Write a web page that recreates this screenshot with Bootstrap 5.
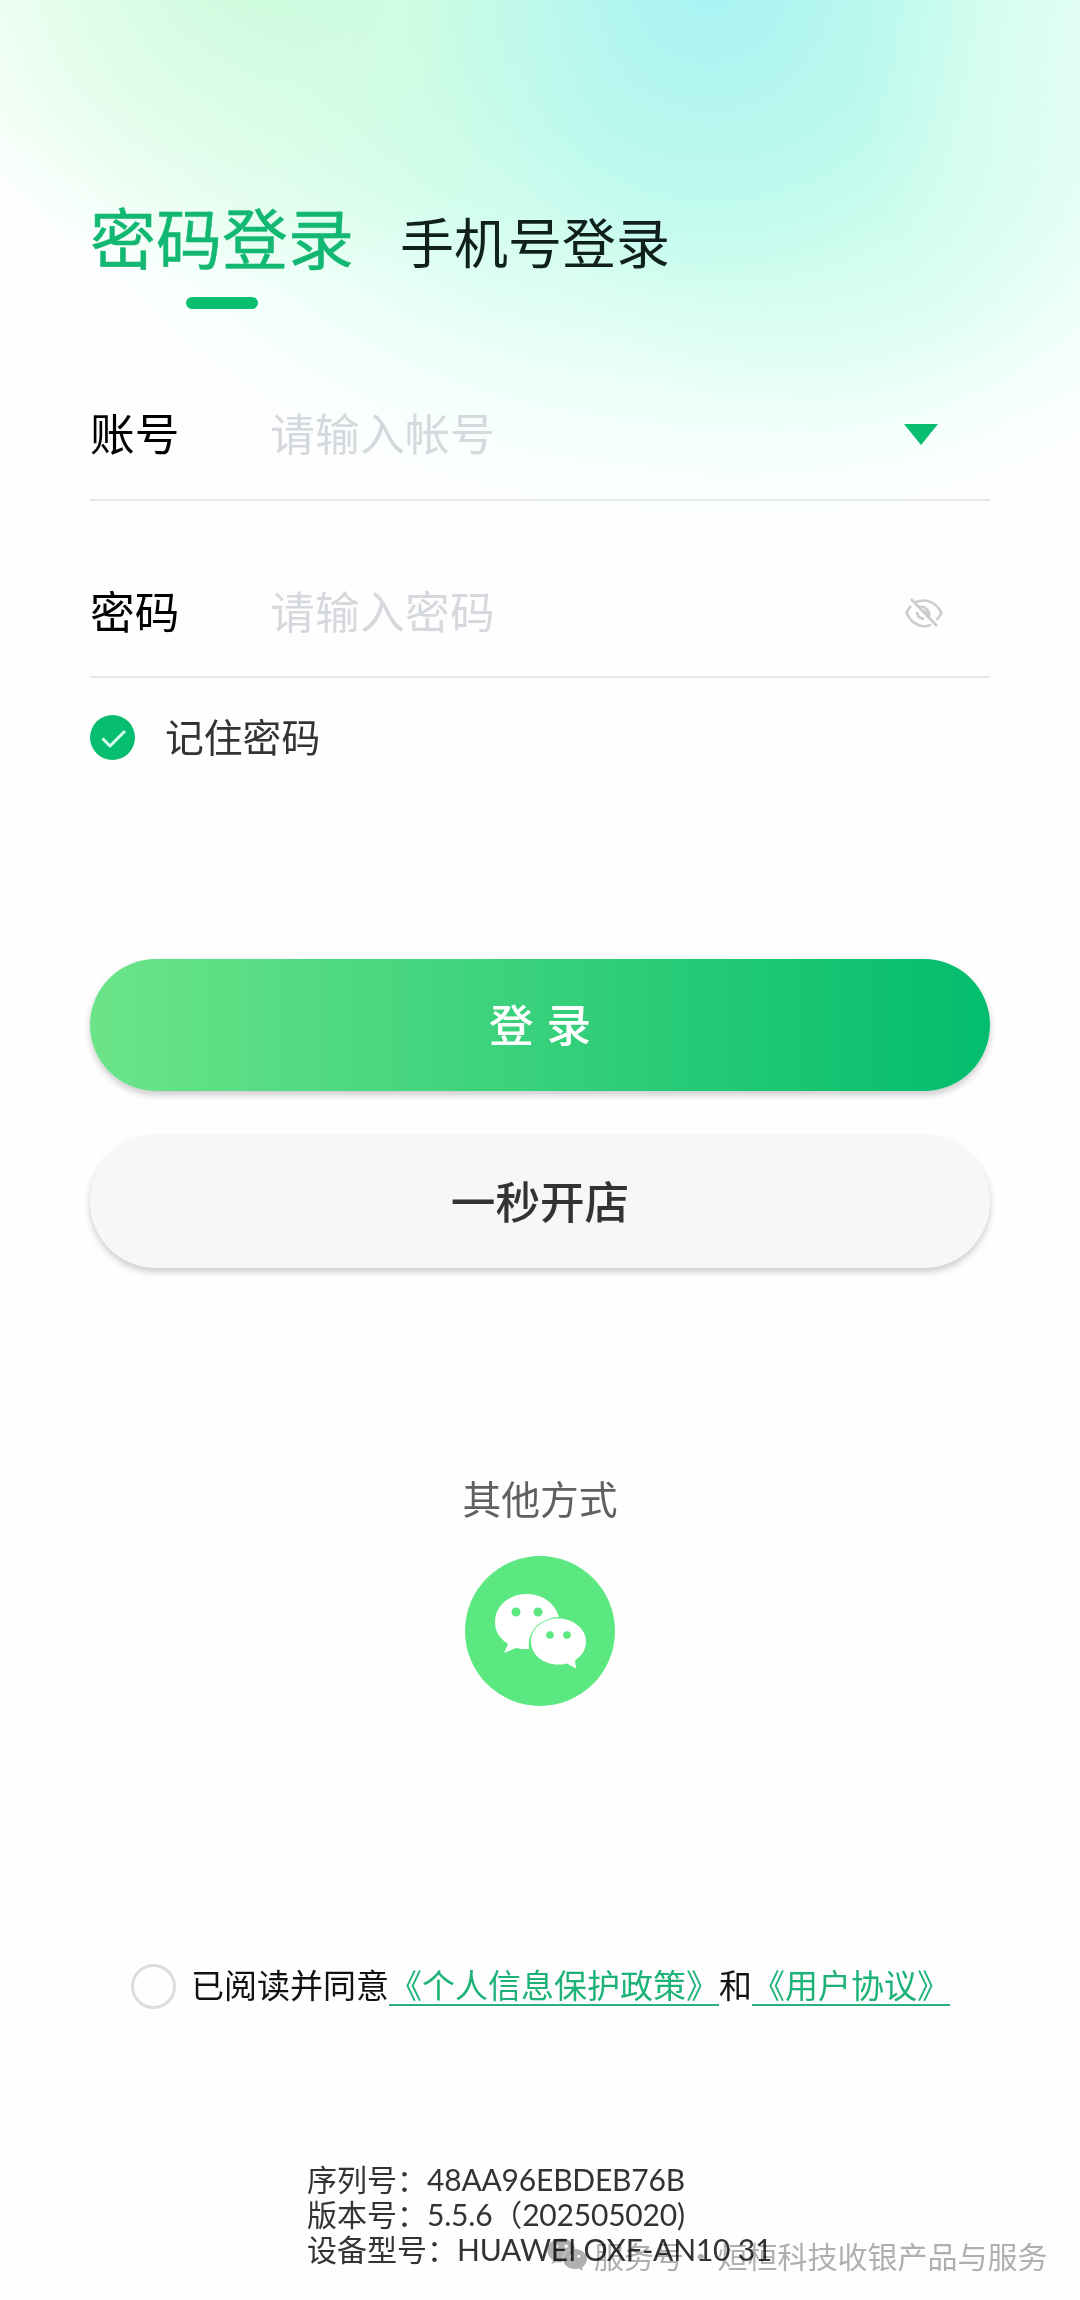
<!DOCTYPE html>
<html lang="zh-CN">
<head>
<meta charset="utf-8">
<meta name="viewport" content="width=device-width, initial-scale=1">
<title>登录</title>
<link rel="stylesheet" href="https://cdn.jsdelivr.net/npm/bootstrap@5.3.0/dist/css/bootstrap.min.css">
<style>
body{font-family:"Noto Sans CJK SC",sans-serif;background:#fefefe;color:#000;line-height:1}
.screen{width:1080px;height:2300px;padding:186px 90px 0;overflow:hidden;
background:
radial-gradient(ellipse 250px 340px at 1110px 60px,rgba(240,255,250,.6) 0,rgba(240,255,250,.3) 50%,rgba(240,255,250,0) 100%),
radial-gradient(ellipse 290px 320px at 710px -20px,rgba(165,241,246,.85) 0,rgba(170,243,244,.5) 45%,rgba(180,247,240,0) 100%),
radial-gradient(ellipse 380px 330px at 250px -40px,rgba(202,250,218,.9) 0,rgba(212,252,222,.6) 45%,rgba(235,255,240,0) 100%),
radial-gradient(ellipse 400px 420px at 840px 110px,rgba(200,252,236,.45) 0,rgba(205,253,238,.35) 50%,rgba(235,255,248,.15) 80%,rgba(250,255,254,0) 100%),
radial-gradient(ellipse 740px 560px at 700px -20px,#b9f9e8 0,#c0fbe8 30%,#d0fded 50%,#e6fff5 67%,#f4fffb 82%,#fbfffe 93%,#fefefe 100%),
#fefefe;background-repeat:no-repeat}
.tab-main{font-size:66px;color:#12b772;-webkit-text-stroke:.5px #12b772}
.tab-alt{font-size:54px;color:#10201d;margin-left:46px}
.tabs{height:82px}
.tab-bar{width:72px;height:12px;border-radius:6px;background:#07bd6f;margin:29px 0 0 96px}
.field{height:177px;border-bottom:2px solid #e5e9ee;font-size:44.7px}
.field-user{height:192px;padding-top:60px}
.field-pass{padding-top:48px}
.field>div{margin-top:-5px}
.field-user>div{margin-top:-3px}
.field-label{width:180px}
.ph{color:#d5d8dc;flex:1;letter-spacing:.3px}
.cta{height:132px;border-radius:66px;font-size:44.6px;font-weight:500;box-shadow:0 4px 7px rgba(0,0,0,.2)}
.cta span{position:relative;top:-2px}
.cta-go{background:linear-gradient(90deg,#6ce489,#03bd6d);color:#fff;margin-top:199px}
.cta-go span{word-spacing:3px}
.cta-shop{background:#f7f7f7;color:#333;margin-top:44px;height:133px}
.cta-shop span{top:-1px}
.remember{font-size:38.8px;color:#333;height:45px;margin-top:37px}
.remember span{margin:-4px 0 0 30px}
.other{font-size:38.8px;color:#606060;margin-top:210px}
.agree{font-size:33px;color:#111;white-space:nowrap;margin:258px 0 0 41px;height:45px}
.agree a{color:#1db277;text-decoration:none;background:linear-gradient(#2bb07b,#2bb07b) 0 calc(100% - 2px)/100% 2px no-repeat}
.ring{width:45px;height:45px;border:3px solid #ddd;border-radius:50%}
.info{font-family:Lato,"Noto Sans CJK SC",sans-serif;font-size:30px;line-height:35.2px;color:#333;white-space:nowrap;margin:153px 0 0 217px}
.info span{letter-spacing:-.2px}
.wm{left:547px;top:2238px;font-size:30px;color:#b0b0b0;white-space:nowrap;mix-blend-mode:multiply;word-spacing:-5px}
</style>
</head>
<body>
<svg width="0" height="0" class="position-absolute"><defs>
<symbol id="chat" viewBox="0 0 92 76">
<path d="M33 1C15 1 1 13 1 29c0 9 4 16 13 22l-4 9 12-5c4 1 8 1 13 1C33 39 45 25 65 24 61 10 48 1 33 1Z"/>
<path d="M64 25.500c-15 0-27 10-27 23s12 23 27 23c3 0 6 0 9-1l9 5-1-8c7-5 11-11 11-19 0-13-13-23-28-23Z"/>
</symbol></defs></svg>
<main class="screen position-relative d-flex flex-column">
<div class="tabs d-flex align-items-end">
<div class="tab-main">密码登录</div><div class="tab-alt">手机号登录</div>
</div>
<div class="tab-bar"></div>
<div class="field field-user d-flex align-items-center"><div class="field-label">账号</div><div class="ph">请输入帐号</div>
<svg width="34" height="21" viewBox="0 0 34 21" style="margin-right:52px"><path d="M0 0h34L17 21Z" fill="#07bd6f"/></svg></div>
<div class="field field-pass d-flex align-items-center"><div class="field-label">密码</div><div class="ph">请输入密码</div>
<svg width="38" height="30" viewBox="0 0 38 30" fill="none" stroke="#ccc" stroke-width="2.600" style="margin-right:47px"><path d="M6 8Q3 11 1.500 15C8 29 20 30 26 26.500M11 4C21 0 31 4 36.500 15q-2 4-5 7M13 9.500a8 8 0 0 1 11 9M12 14q0 6 7 7M17 13q5 0 5 5M6 1 32 28"/></svg></div>
<div class="remember d-flex align-items-center">
<svg width="45" height="45" viewBox="0 0 45 45"><circle cx="22.500" cy="22.500" r="22.500" fill="#07bd6f"/><path d="m12.500 23.500 7.500 7.500 15-15" fill="none" stroke="#d9fff0" stroke-width="3"/></svg>
<span>记住密码</span></div>
<button class="cta cta-go btn border-0 w-100 p-0"><span>登 录</span></button>
<button class="cta cta-shop btn border-0 w-100 p-0"><span>一秒开店</span></button>
<div class="other text-center">其他方式</div>
<svg class="mx-auto" width="150" height="150" viewBox="0 0 150 150" style="margin-top:39px"><circle cx="75" cy="75" r="75" fill="#5ce880"/><use href="#chat" x="29" y="37" width="92" height="76" fill="#fff"/><g fill="#5ce880"><circle cx="51" cy="56" r="4.500"/><circle cx="73" cy="56" r="4.500"/><circle cx="85" cy="79" r="3.800"/><circle cx="102" cy="79" r="3.800"/></g></svg>
<div class="agree d-flex align-items-center"><div class="ring"></div><div style="margin:-3px 0 0 15px">已阅读并同意<a href="#">《个人信息保护政策》</a>和<a href="#">《用户协议》</a></div></div>
<div class="info">
<div>序列号：<span>48AA96EBDEB76B</span></div><div>版本号：<span>5.5.6（202505020)</span></div><div>设备型号：<span>HUAWEI OXF-AN10 31</span></div></div>
<div class="wm position-absolute d-flex align-items-center"><svg width="40" height="33" viewBox="0 0 92 76"><use href="#chat" width="92" height="76" fill="#b0b0b0"/><g fill="#fff"><circle cx="22" cy="19" r="4"/><circle cx="44" cy="19" r="4"/><circle cx="56" cy="42" r="3.500"/><circle cx="73" cy="42" r="3.500"/></g></svg><span style="margin-left:7px">服务号 · 烜桓科技收银产品与服务</span></div>
</main>
<script src="https://cdn.jsdelivr.net/npm/bootstrap@5.3.0/dist/js/bootstrap.bundle.min.js"></script>
</body>
</html>
